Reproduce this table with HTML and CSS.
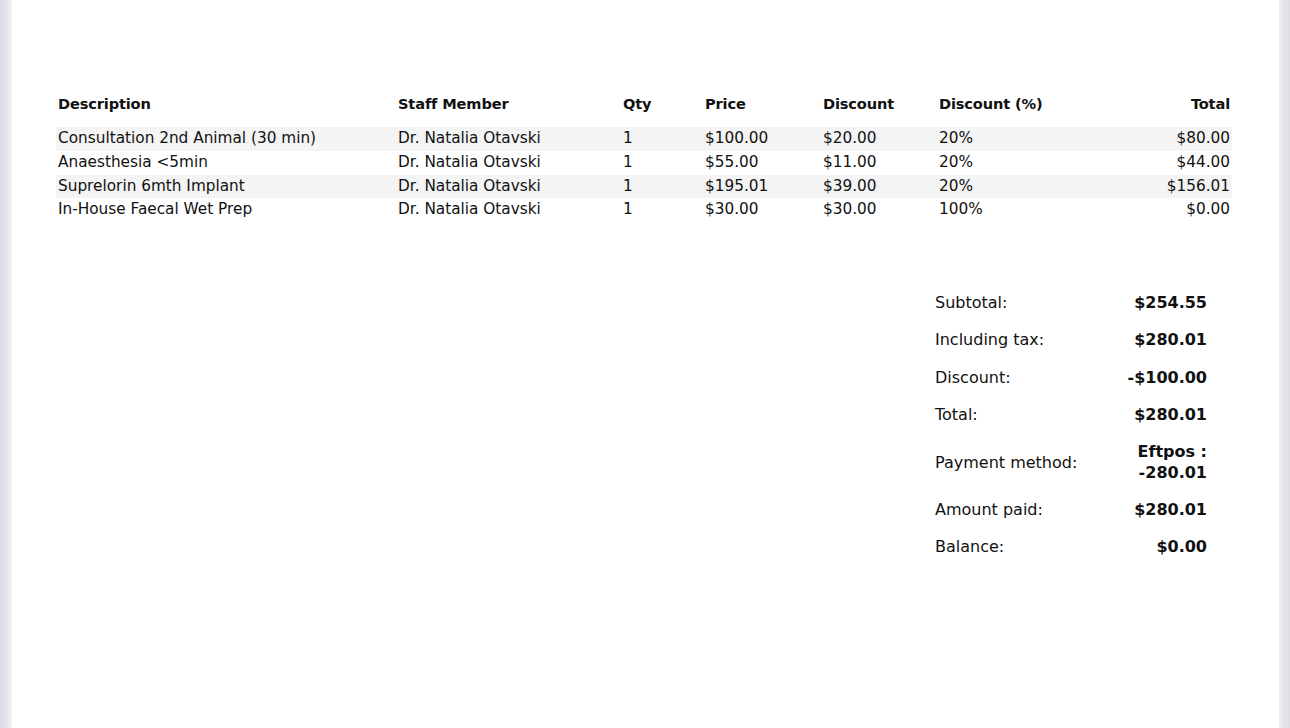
FILE: index.html
```html
<!DOCTYPE html>
<html>
<head>
<meta charset="utf-8">
<link rel="stylesheet" href="styles.css">
</head>
<body>
<div class="page">
  <table class="items">
    <thead>
      <tr>
        <th class="c-desc">Description</th>
        <th class="c-staff">Staff Member</th>
        <th class="c-qty">Qty</th>
        <th class="c-price">Price</th>
        <th class="c-disc">Discount</th>
        <th class="c-pct">Discount (%)</th>
        <th class="c-total">Total</th>
      </tr>
    </thead>
    <tbody>
      <tr class="odd">
        <td>Consultation 2nd Animal (30 min)</td>
        <td>Dr. Natalia Otavski</td>
        <td>1</td>
        <td>$100.00</td>
        <td>$20.00</td>
        <td>20%</td>
        <td class="c-total">$80.00</td>
      </tr>
      <tr>
        <td>Anaesthesia &lt;5min</td>
        <td>Dr. Natalia Otavski</td>
        <td>1</td>
        <td>$55.00</td>
        <td>$11.00</td>
        <td>20%</td>
        <td class="c-total">$44.00</td>
      </tr>
      <tr class="odd">
        <td>Suprelorin 6mth Implant</td>
        <td>Dr. Natalia Otavski</td>
        <td>1</td>
        <td>$195.01</td>
        <td>$39.00</td>
        <td>20%</td>
        <td class="c-total">$156.01</td>
      </tr>
      <tr>
        <td>In-House Faecal Wet Prep</td>
        <td>Dr. Natalia Otavski</td>
        <td>1</td>
        <td>$30.00</td>
        <td>$30.00</td>
        <td>100%</td>
        <td class="c-total">$0.00</td>
      </tr>
    </tbody>
  </table>

  <div class="summary-wrap">
    <table class="summary">
      <tr><td class="lbl">Subtotal:</td><td class="val">$254.55</td></tr>
      <tr><td class="lbl">Including tax:</td><td class="val">$280.01</td></tr>
      <tr><td class="lbl">Discount:</td><td class="val">-$100.00</td></tr>
      <tr><td class="lbl">Total:</td><td class="val">$280.01</td></tr>
      <tr><td class="lbl">Payment method:</td><td class="val">Eftpos : -280.01</td></tr>
      <tr><td class="lbl">Amount paid:</td><td class="val">$280.01</td></tr>
      <tr><td class="lbl">Balance:</td><td class="val">$0.00</td></tr>
    </table>
  </div>
</div>
</body>
</html>
```

FILE: styles.css
```css
html, body {
  margin: 0;
  padding: 0;
  height: 100%;
}
body {
  background: linear-gradient(to right, #dcdce2 0, #e8e8ee 9px, #efefef 9px, #efefef 12px, #ffffff 12px, #ffffff 1279px, #efefef 1279px, #efefef 1281px, #e8e8ee 1281px, #dcdce2 1290px);
  font-family: "DejaVu Sans", sans-serif;
  color: #111;
  overflow: hidden;
}
.page {
  margin: 0 11px 0 12px;
  height: 728px;
  background: #fff;
  padding: 92px 47px 0 44px;
  box-sizing: border-box;
}
.items {
  width: 100%;
  border-collapse: collapse;
  font-size: 15.3px;
}
.items th {
  font-weight: bold;
  text-align: left;
  padding: 3px 2px 15px;
  font-size: 14.6px;
  letter-spacing: -0.15px;
}
.items td {
  padding: 2px 2px;
  line-height: 19.8px;
  white-space: nowrap;
}
.items tr.odd td {
  background: #f4f4f4;
}
.c-desc { width: 336px; }
.c-staff { width: 221px; }
.c-qty { width: 78px; }
.c-price { width: 114px; }
.c-disc { width: 112px; }
.c-pct { width: 140px; }
.items .c-total { text-align: right; }

.summary-wrap {
  display: flex;
  justify-content: flex-end;
  padding: 64px 25px 0 0;
}
.summary {
  border-collapse: collapse;
  font-size: 16px;
}
.summary td {
  padding: 6.1px 0 10.1px;
  line-height: 21px;
  vertical-align: middle;
}
.summary .lbl {
  width: 180px;
  padding-left: 2px;
}
.summary .val {
  width: 92px;
  text-align: right;
  font-weight: bold;
}
```
